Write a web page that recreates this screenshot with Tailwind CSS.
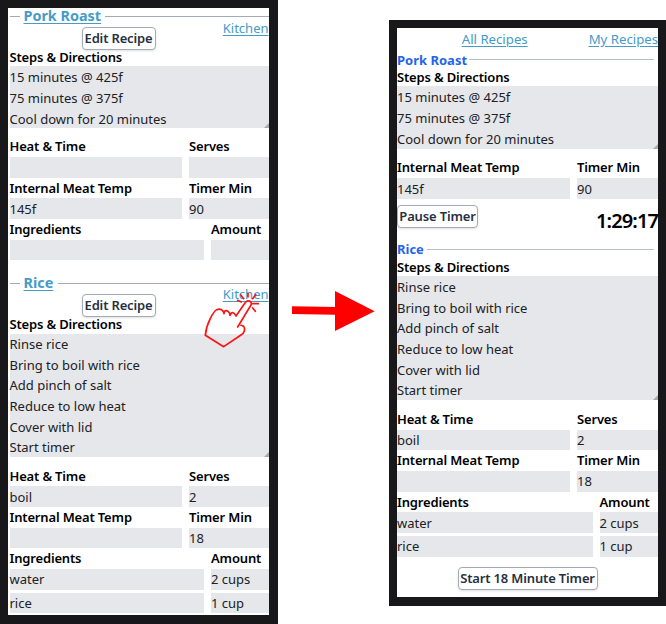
<!DOCTYPE html>
<html lang="en">
<head>
<meta charset="utf-8">
<title>Recipes</title>
<script src="https://cdn.jsdelivr.net/npm/@tailwindcss/browser@4"></script>
</head>
<body class="relative w-[666px] h-[624px] overflow-hidden bg-white font-['Noto_Sans','Open_Sans',sans-serif] text-[13px] leading-[20.67px] text-[#202124] flex items-start [&_b]:block [&_b]:h-[20.67px] [&_b]:font-semibold [&_b]:tracking-[-0.16px] [&_b]:text-black [&_b]:whitespace-nowrap [&_p]:h-[20.67px] [&_p]:bg-[#e5e7eb] [&_p]:pt-[0.5px] [&_button]:h-[23px] [&_button]:border [&_button]:border-[#a3abba] [&_button]:rounded-[4px] [&_button]:bg-white [&_button]:shadow-sm [&_button]:font-semibold [&_button]:tracking-[-0.16px] [&_button]:text-[#27303f] [&_button]:whitespace-nowrap [&_a]:underline [&_a]:text-[#459bc8] [&_a]:underline-offset-2 [&_pre]:font-[inherit] [&_pre]:bg-[#e5e7eb] [&_pre]:relative">

<section class="w-[278px] h-[624px] shrink-0 bg-[#18181a] pl-[7.5px] pr-[9.5px] pt-[7.5px] pb-[9px]">
  <div class="h-full bg-white pl-[2px]">
    <div class="h-[17px] flex items-center">
      <span class="w-[10px] h-px bg-[#a3abba]"></span>
      <a class="mx-1 w-[77px] text-[14.4px] leading-[17px] -translate-y-px font-bold whitespace-nowrap">Pork Roast</a>
      <span class="flex-1 h-px bg-[#a3abba]"></span>
    </div>
    <div class="h-[23.5px] mt-[2px] flex justify-between pl-[72px]">
      <button class="w-[74px]">Edit Recipe</button>
      <a class="-mt-[9px] h-[20px] self-start">Kitchen</a>
    </div>
    <b class="-mt-[3px] h-[19px]">Steps &amp; Directions</b>
    <pre class="h-[62px] -mt-[1.5px] pt-px">15 minutes @ 425f
75 minutes @ 375f
Cool down for 20 minutes<svg class="absolute right-0 bottom-0" width="5" height="5"><path d="M5 0V5H0Z" fill="#aaa"/></svg></pre>
    <div class="grid grid-cols-[172.5px_1fr] gap-x-[7px] mt-[8.3px]">
      <b>Heat &amp; Time</b><b>Serves</b><p></p><p></p>
      <b>Internal Meat Temp</b><b>Timer Min</b><p>145f</p><p>90</p>
    </div>
    <div class="grid grid-cols-[194.5px_1fr] gap-x-[7px]">
      <b>Ingredients</b><b>Amount</b><p></p><p></p>
    </div>
    <div class="h-[17px] mt-[15px] flex items-center">
      <span class="w-[10px] h-px bg-[#a3abba]"></span>
      <a class="mx-1 w-[30px] text-[14.4px] leading-[17px] -translate-y-px font-bold whitespace-nowrap">Rice</a>
      <span class="flex-1 h-px bg-[#a3abba]"></span>
    </div>
    <div class="h-[23.5px] mt-[1.5px] flex justify-between pl-[72px]">
      <button class="w-[74px]">Edit Recipe</button>
      <a class="-mt-[9px] h-[20px] self-start -translate-y-px">Kitchen</a>
    </div>
    <b class="-mt-[3px] h-[19px]">Steps &amp; Directions</b>
    <pre class="h-[123.5px] -mt-[1.2px]">Rinse rice
Bring to boil with rice
Add pinch of salt
Reduce to low heat
Cover with lid
Start timer<svg class="absolute right-0 bottom-0" width="5" height="5"><path d="M5 0V5H0Z" fill="#aaa"/></svg></pre>
    <div class="grid grid-cols-[172.5px_1fr] gap-x-[7px] mt-[8.3px]">
      <b>Heat &amp; Time</b><b>Serves</b><p>boil</p><p>2</p>
      <b>Internal Meat Temp</b><b>Timer Min</b><p></p><p>18</p>
    </div>
    <div class="grid grid-cols-[194.5px_1fr] gap-x-[7px]">
      <b>Ingredients</b><b>Amount</b><p>water</p><p>2 cups</p>
      <p class="mt-[3px]">rice</p><p class="mt-[3px]">1 cup</p>
    </div>
  </div>
</section>

<section class="ml-[111px] mt-[20px] w-[277px] h-[586px] shrink-0 bg-[#18181a] pl-[8px] pr-[8px] pt-[8px] pb-[9px]">
  <div class="h-full bg-white">
    <div class="flex justify-end gap-[61px] h-[23px] pt-[1px] text-[13.2px]"><a>All Recipes</a><a>My Recipes</a></div>
    <div class="h-[17px] flex items-center">
      <span class="w-[72px] font-bold text-[#2563eb] whitespace-nowrap translate-y-px">Pork Roast</span>
      <span class="flex-1 h-px bg-[#b8bfca] mr-1"></span>
    </div>
    <b class="-mt-px">Steps &amp; Directions</b>
    <pre class="h-[62.5px] -mt-[1.5px] pt-px">15 minutes @ 425f
75 minutes @ 375f
Cool down for 20 minutes<svg class="absolute right-0 bottom-0" width="5" height="5"><path d="M5 0V5H0Z" fill="#aaa"/></svg></pre>
    <div class="grid grid-cols-[173px_1fr] gap-x-[7px] mt-[8.8px]">
      <b>Internal Meat Temp</b><b>Timer Min</b><p>145f</p><p>90</p>
    </div>
    <div class="h-[42px] flex justify-between pt-[6.5px]">
      <button class="w-[81px]">Pause Timer</button>
      <span class="text-[20px] leading-[32px] tracking-[-0.9px] font-semibold text-black">1:29:17</span>
    </div>
    <div class="h-[17px] flex items-center">
      <span class="w-[30px] font-bold text-[#2563eb]">Rice</span>
      <span class="flex-1 h-px bg-[#b8bfca] mr-1"></span>
    </div>
    <b class="-mt-px">Steps &amp; Directions</b>
    <pre class="h-[124.5px] -mt-[1.5px] pt-px">Rinse rice
Bring to boil with rice
Add pinch of salt
Reduce to low heat
Cover with lid
Start timer<svg class="absolute right-0 bottom-0" width="5" height="5"><path d="M5 0V5H0Z" fill="#aaa"/></svg></pre>
    <div class="grid grid-cols-[173px_1fr] gap-x-[7px] mt-[8.5px]">
      <b>Heat &amp; Time</b><b>Serves</b><p>boil</p><p>2</p>
      <b>Internal Meat Temp</b><b>Timer Min</b><p></p><p>18</p>
    </div>
    <div class="grid grid-cols-[195.5px_1fr] gap-x-[7px]">
      <b>Ingredients</b><b>Amount</b><p>water</p><p>2 cups</p>
      <p class="mt-[3px]">rice</p><p class="mt-[3px]">1 cup</p>
    </div>
    <div class="flex justify-center pt-[10.5px]"><button class="w-[140px]">Start 18 Minute Timer</button></div>
  </div>
</section>

<svg class="absolute left-[195px] top-[280px]" width="190" height="75" viewBox="0 0 570 225" fill="none">
  <path d="M291 79L420 81V33L539 94L420 153V104L291 102Z" fill="#f00"/>
  <path d="M31 166L86 200L138 165C149 159 151 147 146 139L138 136M128 141L168 75C172 65 161 58 152 66L123 108C119 100 114 96 109 99L105 106C104 94 95 89 88 94L87 101C85 90 76 85 65 89C57 94 34 128 31 166M159 40V51M137 45L146 56M182 44L173 56M174 71H190M173 84L181 94M128 61L139 66" stroke="#f11" stroke-width="5" stroke-linecap="round" stroke-linejoin="round"/>
</svg>
</body>
</html>
